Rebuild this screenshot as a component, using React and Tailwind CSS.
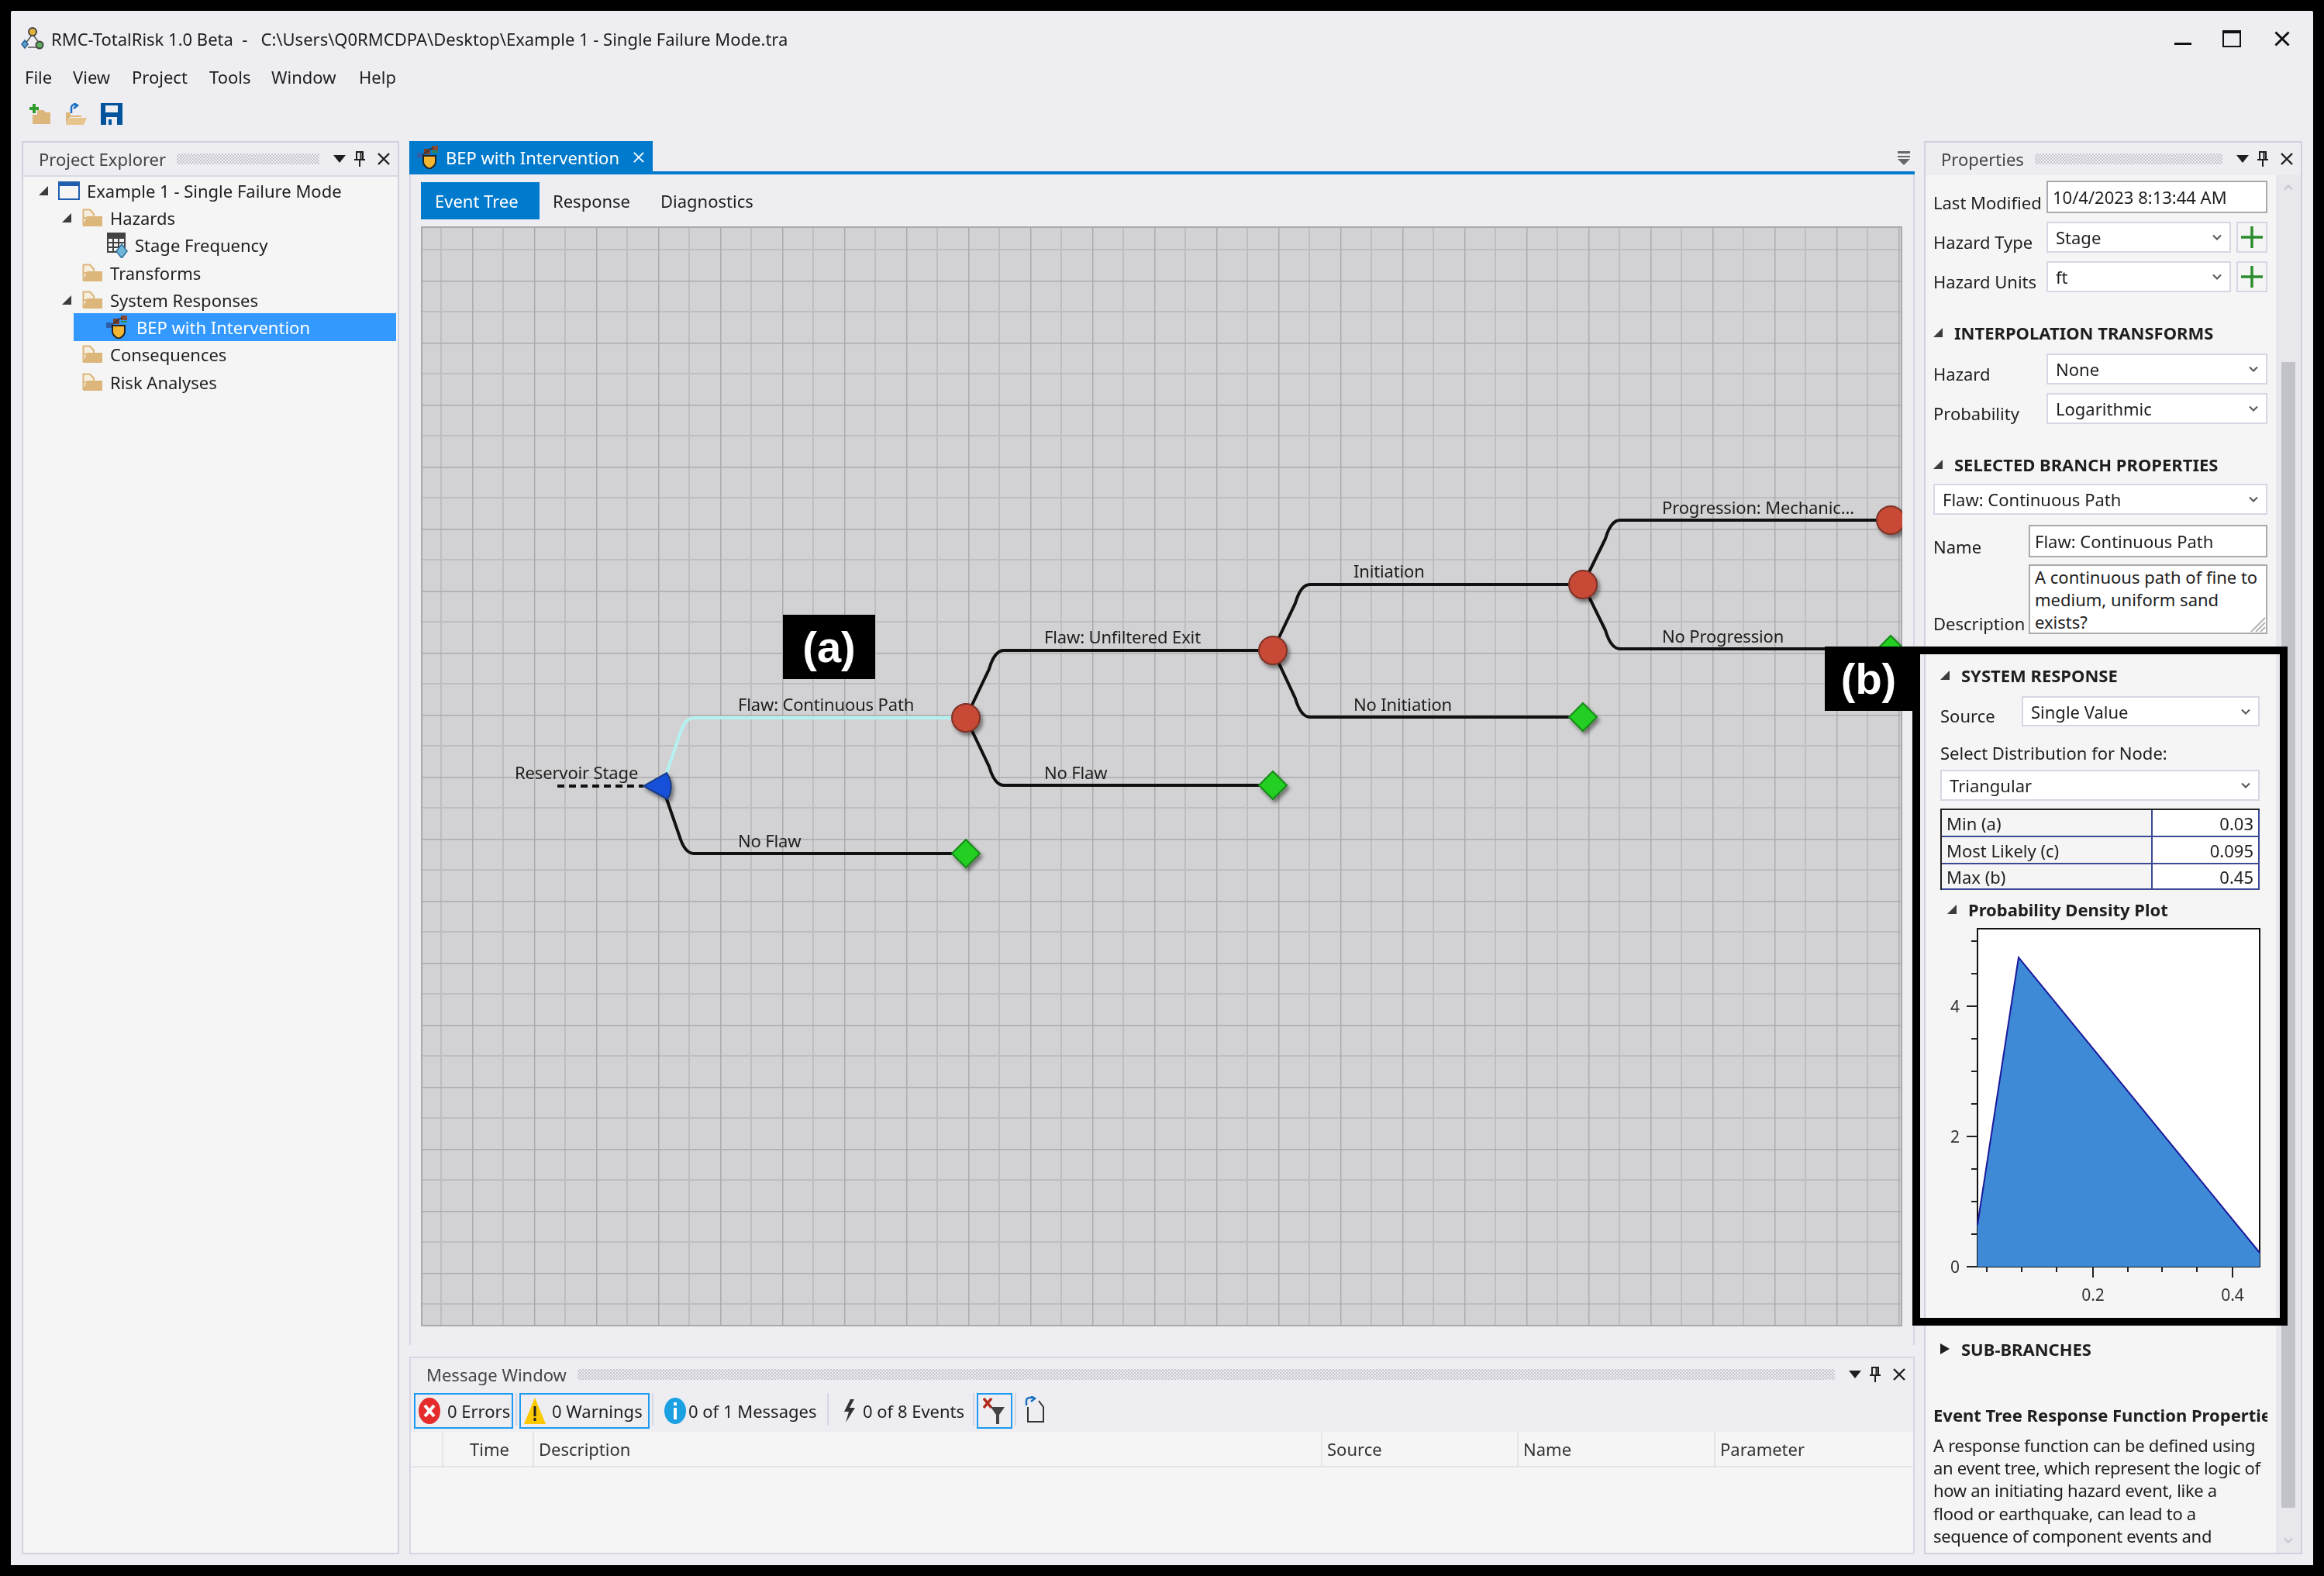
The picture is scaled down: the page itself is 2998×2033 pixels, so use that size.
import React from "react";

const XIcon = ({ s = 18, c = "#1e1e1e", w = 2.4 }) => (
  <svg width={s} height={s} viewBox="0 0 18 18" className="shrink-0"><path d="M2 2L16 16M16 2L2 16" stroke={c} strokeWidth={w} fill="none" /></svg>
);
const Pin = () => (
  <svg width="14" height="22" viewBox="0 0 14 22" className="shrink-0"><path d="M3 2h8v10H3zM0 12h14M7 12v9M8.5 2v10" stroke="#1e1e1e" strokeWidth="2" fill="none" /></svg>
);
const Corner = () => (
  <svg width="12" height="12" viewBox="0 0 12 12" className="shrink-0"><path d="M12 0V12H0Z" fill="#3c3c3c" /></svg>
);
const Chevron = ({ c = "#555" }) => (
  <svg width="12" height="8" viewBox="0 0 12 8" className="shrink-0"><path d="M1 1.5L6 6.5L11 1.5" stroke={c} strokeWidth="2" fill="none" /></svg>
);
const Folder = () => (
  <svg width="27" height="24" viewBox="0 0 27 24" className="shrink-0">
    <path d="M1.5 22V1.5H10L15 7V12H1.5Z" fill="#f6efe0" stroke="#dcb67a" strokeWidth="2" />
    <path d="M1 23L6 10H26V23Z" fill="#dcb67a" />
  </svg>
);
const BepIcon = () => (
  <svg width="30" height="30" viewBox="0 0 30 30" className="shrink-0">
    <rect x="0" y="9" width="7" height="7" fill="#2f5fa8" />
    <rect x="9" y="4" width="8" height="7" fill="#7a3d2a" />
    <rect x="19" y="0" width="8" height="6" fill="#8a4a35" />
    <path d="M19 7h8v2h-8z" fill="#2f8a3a" />
    <path d="M7 12L15 6M15 5l6-2" stroke="#333" strokeWidth="1.5" />
    <path d="M8 13h16v8c0 4-4 7-8 9-4-2-8-5-8-9z" fill="#f2b632" stroke="#222" strokeWidth="2" />
  </svg>
);
const TableIcon = () => (
  <svg width="28" height="34" viewBox="0 0 28 34" className="shrink-0">
    <rect x="1" y="1" width="24" height="6" fill="#424242" />
    <path d="M2 8h22v18H2z" fill="#f5f5f5" stroke="#424242" strokeWidth="2" />
    <path d="M9 8v18M16 8v18M2 14h22M2 20h22" stroke="#424242" strokeWidth="2" />
    <path d="M20 16l7 9-7 9-7-9z" fill="#6fb5d8" stroke="#2f6f9f" strokeWidth="1.5" />
  </svg>
);
const WinIcon = () => (
  <svg width="28" height="24" viewBox="0 0 28 24" className="shrink-0">
    <rect x="1" y="1" width="26" height="22" fill="#f5f5f5" stroke="#1f5fae" strokeWidth="2" />
    <rect x="1" y="1" width="26" height="5" fill="#1f5fae" />
  </svg>
);
const AppIcon = () => (
  <svg width="30" height="32" viewBox="0 0 30 32" className="shrink-0">
    <path d="M15 10L6 22M15 10L24 22M9 27H21" stroke="#555" strokeWidth="1.5" fill="none" />
    <circle cx="15" cy="7" r="5" fill="#e2b33c" stroke="#444" strokeWidth="2" />
    <path d="M5 18l4 5-4 5-4-5z" fill="#5a9fd0" stroke="#2a5f8f" strokeWidth="1.5" />
    <circle cx="24" cy="24" r="4.5" fill="#5fae5f" stroke="#444" strokeWidth="2" />
  </svg>
);

const DockHead = ({ title }) => (
  <div className="flex h-[42px] shrink-0 items-center pl-[20px]">
    <span className="whitespace-nowrap text-[#444]">{title}</span>
    <div className="ml-[14px] h-[14px] flex-1 bg-[repeating-conic-gradient(#c6c7cf_0_25%,transparent_0_50%)] bg-[length:4px_4px]" />
    <div className="flex w-[101px] shrink-0 items-center pl-[18px]">
      <svg width="16" height="10" viewBox="0 0 16 10" className="shrink-0"><path d="M0 0H16L8 10Z" fill="#1e1e1e" /></svg>
      <span className="ml-[11px]"><Pin /></span>
      <span className="ml-[15px]"><XIcon s={18} /></span>
    </div>
  </div>
);

const TreeRow = ({ indent, arrowPad = 14, arrow, icon, text, selected }) => (
  <div className={`flex h-[35.3px] items-center ${selected ? "ml-[65px] mr-[2px] bg-[#3399ff] text-white" : ""}`}>
    <div style={{ width: selected ? indent - 65 : indent, paddingRight: arrowPad }} className="flex shrink-0 items-center justify-end">
      {arrow && <Corner />}
    </div>
    {icon}
    <span className="ml-[9px] whitespace-nowrap">{text}</span>
  </div>
);

const Combo = ({ text, className = "h-[40px]" }) => (
  <div className={`flex items-center justify-between border-2 border-[#d5d7e5] bg-white pl-[10px] pr-[10px] ${className}`}>
    <span className="whitespace-nowrap">{text}</span>
    <Chevron />
  </div>
);
const Plus = () => (
  <div className="ml-[7px] flex h-[40px] w-[40px] shrink-0 items-center justify-center border-2 border-[#d5d7e5] bg-[#f5f5f5]">
    <svg width="28" height="28" viewBox="0 0 28 28"><path d="M14 0V28M0 14H28" stroke="#2c8c2c" strokeWidth="3.5" /></svg>
  </div>
);
const Field = ({ label, w, className = "", children }) => (
  <div className={`flex items-end ${className}`}>
    <span style={{ width: w }} className="shrink-0 whitespace-nowrap pb-[1px] leading-[26px]">{label}</span>
    {children}
  </div>
);
const Heading = ({ text, open = true, className = "" }) => (
  <div className={`flex h-[30px] items-center font-bold ${className}`}>
    {open ? <Corner /> : <svg width="12" height="14" viewBox="0 0 12 14" className="shrink-0"><path d="M0 0L12 7L0 14Z" fill="#1e1e1e" /></svg>}
    <span className="ml-[15px] whitespace-nowrap">{text}</span>
  </div>
);
const Input = ({ text, className = "" }) => (
  <div className={`flex h-[42px] flex-1 items-center border-2 border-[#a9a9b0] bg-white pl-[6px] ${className}`}>
    <span className="whitespace-nowrap">{text}</span>
  </div>
);
const ParamRow = ({ name, value, first, last }) => (
  <div className={`flex border-[#3b4a96] ${first ? "h-[33px]" : "h-[35px] border-t-2"} ${last ? "border-b-2" : ""}`}>
    <div className="flex w-[272px] items-center border-r-2 border-[#3b4a96] bg-[#f5f5f5] pl-[6px]">{name}</div>
    <div className="flex flex-1 items-center justify-end bg-white pr-[6px]">{value}</div>
  </div>
);

const branch = (x0, y0, x1, y1, x2) => {
  const s = y1 < y0 ? 1 : -1;
  return `M${x0} ${y0}L${x1 - 14} ${y1 + s * 24}Q${x1 - 7} ${y1} ${x1 + 5} ${y1}L${x2} ${y1}`;
};
const Circle = ({ x, y }) => <circle cx={x} cy={y} r="18" fill="#c84a36" stroke="#7c3226" strokeWidth="2" filter="url(#sh)" />;
const Diamond = ({ x, y }) => <path d={`M${x} ${y - 18}L${x + 18} ${y}L${x} ${y + 18}L${x - 18} ${y}Z`} fill="#22cf22" stroke="#178a17" strokeWidth="2" filter="url(#sh)" />;
const Lbl = ({ x, y, t }) => <text x={x} y={y} dominantBaseline="central" fontSize="22" fill="#1e1e1e" fontFamily="Noto Sans" letterSpacing="-0.15">{t}</text>;

const Diagram = () => (
  <svg viewBox="543 292 1911 1419" width="1911" height="1419" className="block">
    <defs>
      <pattern id="g" x="609" y="362" width="80" height="80" patternUnits="userSpaceOnUse">
        <path d="M40 0V80M0 40H80" stroke="#bebec0" strokeWidth="2" />
        <path d="M0 0V80M0 0H80" stroke="#ababad" strokeWidth="3" />
      </pattern>
      <filter id="sh" x="-30%" y="-30%" width="170%" height="170%"><feDropShadow dx="3" dy="4" stdDeviation="2.5" floodColor="#000" floodOpacity="0.45" /></filter>
    </defs>
    <rect x="543" y="292" width="1911" height="1419" fill="#d2d2d4" />
    <rect x="543" y="292" width="1911" height="1419" fill="url(#g)" />
    <rect x="544" y="293" width="1909" height="1417" fill="none" stroke="#a9a9ab" strokeWidth="2" />
    <path d="M719 1014H830" stroke="#111" strokeWidth="4" strokeDasharray="9 6" fill="none" />
    <path d={branch(858, 1003, 890, 926, 1246)} stroke="#b6f1f1" strokeWidth="4" fill="none" />
    <path d={branch(858, 1025, 890, 1101, 1246)} stroke="#111" strokeWidth="4" fill="none" />
    <path d={branch(1246, 926, 1290, 839, 1642)} stroke="#111" strokeWidth="4" fill="none" />
    <path d={branch(1246, 926, 1290, 1013, 1642)} stroke="#111" strokeWidth="4" fill="none" />
    <path d={branch(1642, 839, 1685, 754, 2042)} stroke="#111" strokeWidth="4" fill="none" />
    <path d={branch(1642, 839, 1685, 925, 2042)} stroke="#111" strokeWidth="4" fill="none" />
    <path d={branch(2042, 754, 2085, 671, 2439)} stroke="#111" strokeWidth="4" fill="none" />
    <path d={branch(2042, 754, 2085, 837, 2439)} stroke="#111" strokeWidth="4" fill="none" />
    <path d="M830 1014L860 997Q871 1014 861 1031Z" fill="#1450d8" stroke="#1a3a80" strokeWidth="2" filter="url(#sh)" />
    <Circle x={1246} y={926} /><Circle x={1642} y={839} /><Circle x={2042} y={754} /><Circle x={2439} y={671} />
    <Diamond x={1246} y={1101} /><Diamond x={1642} y={1013} /><Diamond x={2042} y={925} /><Diamond x={2439} y={838} />
    <Lbl x={664} y={996} t="Reservoir Stage" />
    <Lbl x={952} y={908} t="Flaw: Continuous Path" />
    <Lbl x={952} y={1084} t="No Flaw" />
    <Lbl x={1347} y={821} t="Flaw: Unfiltered Exit" />
    <Lbl x={1347} y={996} t="No Flaw" />
    <Lbl x={1746} y={736} t="Initiation" />
    <Lbl x={1746} y={908} t="No Initiation" />
    <Lbl x={2144} y={654} t="Progression: Mechanic..." />
    <Lbl x={2144} y={820} t="No Progression" />
  </svg>
);

const Plot = () => {
  const ys = [0, 1, 2, 3, 4, 5, 6, 7, 8, 9, 10].map((i) => 1634 - i * 42);
  const xs = [2563, 2608, 2653, 2700, 2745, 2789, 2834, 2880];
  return (
    <svg viewBox="2503 1190 424 500" width="424" height="500" className="block">
      <rect x="2551" y="1198" width="364" height="436" fill="#fff" stroke="#111" strokeWidth="2" />
      <path d="M2551 1634V1580L2604 1235L2915 1616V1634Z" fill="#3f8ad6" />
      <path d="M2551 1580L2604 1235L2915 1616" fill="none" stroke="#1a1a9c" strokeWidth="2" />
      {ys.map((y, i) => <path key={y} d={`M${i % 4 === 0 ? 2537 : 2543} ${y}H2551`} stroke="#222" strokeWidth="2" />)}
      {xs.map((x) => <path key={x} d={`M${x} 1634V${x === 2700 || x === 2880 ? 1648 : 1641}`} stroke="#222" strokeWidth="2" />)}
      {[["4", 1298], ["2", 1466], ["0", 1634]].map(([t, y]) => (
        <text key={t} x="2522" y={y} textAnchor="middle" dominantBaseline="central" fontSize="21" fill="#333" fontFamily="Noto Sans">{t}</text>
      ))}
      {[["0.2", 2700], ["0.4", 2880]].map(([t, x]) => (
        <text key={t} x={x} y="1670" textAnchor="middle" dominantBaseline="central" fontSize="21" fill="#333" fontFamily="Noto Sans">{t}</text>
      ))}
    </svg>
  );
};

const ToolBtn = ({ on, children, className = "" }) => (
  <div className={`flex h-[46px] items-center border-2 ${on ? "border-[#1e9bf0]" : "border-transparent"} ${className}`}>{children}</div>
);
const Sep = () => <div className="mx-[3px] h-[42px] w-[2px] shrink-0 bg-[#d5d7e5]" />;

export default function App() {
  return (
    <div className="relative h-[2033px] w-[2998px] overflow-hidden bg-black p-[14px] font-['Noto_Sans',sans-serif] text-[22px] leading-[30px] text-[#1e1e1e]">
      <div className="flex h-full flex-col rounded-t-[2px] bg-[#eeeef2] blur-[0.5px]">
        <div className="flex h-[72px] shrink-0 items-center pl-[13px]">
          <AppIcon />
          <span className="ml-[9px] whitespace-pre">{"RMC-TotalRisk 1.0 Beta  -   C:\\Users\\Q0RMCDPA\\Desktop\\Example 1 - Single Failure Mode.tra"}</span>
          <div className="ml-auto flex items-center pr-[29px]">
            <div className="h-[3px] w-[22px] translate-y-[6px] bg-[#111]" />
            <div className="ml-[40px] h-[22px] w-[24px] border-2 border-t-4 border-[#111]" />
            <span className="ml-[42px]"><XIcon s={22} c="#111" w={2.4} /></span>
          </div>
        </div>
        <div className="flex h-[28px] shrink-0 items-start pl-[18px] leading-[26px]">
          <span className="w-[62px]">File</span>
          <span className="w-[76px]">View</span>
          <span className="w-[100px]">Project</span>
          <span className="w-[80px]">Tools</span>
          <span className="w-[113px]">Window</span>
          <span>Help</span>
        </div>
        <div className="flex h-[68px] shrink-0 items-center pb-[2px] pl-[23px]">
          <svg width="30" height="26" viewBox="0 0 30 26" className="shrink-0">
            <path d="M5 0h4v4h4v4H9v4H5V8H1V4h4z" fill="#2f9e2f" />
            <path d="M5 14h6V8h8l3 3h6v15H5z" fill="#dcb67a" />
          </svg>
          <svg width="30" height="28" viewBox="0 0 30 28" className="ml-[16px] shrink-0">
            <path d="M9 13V6a4 4 0 0 1 4-4h3M12 0l5 3-5 4" stroke="#1a6fc0" strokeWidth="2.5" fill="none" />
            <path d="M2 12h6v4h14v2H7L2 27z" fill="#dcb67a" />
            <path d="M7 19h22l-4 9H2z" fill="#e8c58c" />
          </svg>
          <svg width="28" height="28" viewBox="0 0 28 28" className="ml-[17px] shrink-0">
            <path d="M0 0H28V28H0Z" fill="#00539c" />
            <rect x="6" y="3" width="16" height="9" fill="#eeeef2" />
            <rect x="7" y="18" width="14" height="10" fill="#eeeef2" />
            <rect x="10" y="21" width="4" height="7" fill="#00539c" />
          </svg>
        </div>
        <div className="flex min-h-0 flex-1 gap-x-[12px] pb-[14px] pl-[14px] pr-[14px]">
          <div className="flex w-[487px] shrink-0 flex-col border-2 border-[#cfd1de]">
            <DockHead title="Project Explorer" />
            <div className="flex-1 border-t-2 border-[#d8dae5] bg-[#f5f5f5]">
              <TreeRow indent={45} arrowPad={13} arrow icon={<WinIcon />} text="Example 1 - Single Failure Mode" />
              <TreeRow indent={76} arrow icon={<Folder />} text="Hazards" />
              <TreeRow indent={107} icon={<TableIcon />} text="Stage Frequency" />
              <TreeRow indent={76} icon={<Folder />} text="Transforms" />
              <TreeRow indent={76} arrow icon={<Folder />} text="System Responses" />
              <TreeRow indent={107} selected icon={<BepIcon />} text="BEP with Intervention" />
              <TreeRow indent={76} icon={<Folder />} text="Consequences" />
              <TreeRow indent={76} icon={<Folder />} text="Risk Analyses" />
            </div>
          </div>
          <div className="ml-[1px] flex min-w-0 flex-1 flex-col">
            <div className="flex h-[43px] shrink-0 items-end">
              <div className="flex h-[43px] w-[314px] shrink-0 items-center bg-[#007acc] pb-[2px] pl-[10px] text-white">
                <BepIcon />
                <span className="ml-[7px] whitespace-nowrap">BEP with Intervention</span>
                <span className="ml-[17px]"><XIcon s={16} c="#fff" w={2} /></span>
              </div>
              <div className="relative h-[43px] flex-1 border-b-4 border-[#007acc]">
                <svg width="16" height="18" viewBox="0 0 16 18" className="absolute right-[6px] top-[13px]"><path d="M0 0H16V3H0ZM0 6H16V8H0ZM0 10H16L8 18Z" fill="#666" /></svg>
              </div>
            </div>
            <div className="flex h-[1510px] shrink-0 flex-col border-x-2 border-[#d5d7e5] pl-[13px] pr-[14px]">
              <div className="mt-[10px] flex h-[48px] shrink-0 items-center">
                <div className="flex h-[48px] w-[153px] items-center bg-[#007acc] pl-[18px] text-white">Event Tree</div>
                <span className="ml-[17px]">Response</span>
                <span className="ml-[39px]">Diagnostics</span>
              </div>
              <div className="relative mt-[9px] h-[1419px] w-[1911px] overflow-hidden">
                <Diagram />
                <div className="absolute left-[467px] top-[501px] flex h-[83px] w-[119px] items-center justify-center bg-black font-['Liberation_Sans',sans-serif] text-[56px] font-bold text-white">(a)</div>
              </div>
            </div>
            <div className="mt-[15px] flex min-h-0 flex-1 flex-col border-2 border-[#d5d7e5]">
              <DockHead title="Message Window" />
              <div className="flex h-[53px] shrink-0 items-start pl-[4px] pt-[3px]">
                <ToolBtn on className="w-[128px] pl-[3px]">
                  <svg width="30" height="36" viewBox="0 0 30 36" className="shrink-0"><ellipse cx="15" cy="18" rx="14" ry="17" fill="#e52b2b" /><path d="M9 11L21 25M21 11L9 25" stroke="#fff" strokeWidth="4" /></svg>
                  <span className="ml-[8px] whitespace-nowrap">0 Errors</span>
                </ToolBtn>
                <Sep />
                <ToolBtn on className="w-[168px] pl-[3px]">
                  <svg width="30" height="36" viewBox="0 0 30 36" className="shrink-0"><path d="M15 1L29 35H1Z" fill="#fcc800" /><path d="M15 12V25M15 27V31" stroke="#222" strokeWidth="3" /></svg>
                  <span className="ml-[7px] whitespace-nowrap">0 Warnings</span>
                </ToolBtn>
                <Sep />
                <ToolBtn className="w-[218px] pl-[8px]">
                  <svg width="30" height="36" viewBox="0 0 30 36" className="shrink-0"><ellipse cx="15" cy="18" rx="14" ry="17" fill="#1ba1e2" /><path d="M15 7V11M15 14V29" stroke="#fff" strokeWidth="4" /></svg>
                  <span className="ml-[2px] whitespace-nowrap">0 of 1 Messages</span>
                </ToolBtn>
                <Sep />
                <ToolBtn className="w-[180px] pl-[14px]">
                  <svg width="16" height="30" viewBox="0 0 16 30" className="shrink-0"><path d="M9 0L1 16H7L3 30L15 11H8L14 0Z" fill="#333" /></svg>
                  <span className="ml-[9px] whitespace-nowrap">0 of 8 Events</span>
                </ToolBtn>
                <Sep />
                <ToolBtn on className="w-[46px] pl-[6px]">
                  <svg width="30" height="34" viewBox="0 0 30 34" className="shrink-0"><path d="M1 1L11 13M11 1L1 13" stroke="#b22a1a" strokeWidth="3.5" /><path d="M10 12H28L21 22V34H17V22Z" fill="#444" /></svg>
                </ToolBtn>
                <Sep />
                <span className="ml-[8px] mt-[4px]">
                  <svg width="26" height="34" viewBox="0 0 26 34" className="shrink-0"><path d="M4 14V33H24V14L18 6" stroke="#333" strokeWidth="2" fill="none" /><path d="M2 12V6a4 4 0 0 1 4-4h4M8 0l5 3-5 4" stroke="#1a6fc0" strokeWidth="2.5" fill="none" /></svg>
                </span>
              </div>
              <div className="flex min-h-0 flex-1 flex-col bg-[#f5f5f5]">
                <div className="flex h-[46px] shrink-0 border-b-2 border-[#e4e5ea] text-[#333]">
                  <div className="w-[42px] border-r-2 border-[#e4e5ea]" />
                  <div className="flex w-[117px] items-center justify-end border-r-2 border-[#e4e5ea] pr-[30px]">Time</div>
                  <div className="flex w-[1017px] items-center border-r-2 border-[#e4e5ea] pl-[6px]">Description</div>
                  <div className="flex w-[253px] items-center border-r-2 border-[#e4e5ea] pl-[6px]">Source</div>
                  <div className="flex w-[254px] items-center border-r-2 border-[#e4e5ea] pl-[6px]">Name</div>
                  <div className="flex flex-1 items-center pl-[6px]">Parameter</div>
                </div>
              </div>
            </div>
          </div>
          <div className="flex w-[488px] shrink-0 flex-col border-2 border-[#cfd1de]">
            <DockHead title="Properties" />
            <div className="flex min-h-0 flex-1 bg-[#f5f5f5]">
              <div className="min-w-0 flex-1 overflow-hidden pl-[10px] pr-[11px] pt-[7px]">
                <Field label="Last Modified" w={146}><Input text="10/4/2023 8:13:44 AM" /></Field>
                <Field label="Hazard Type" w={146} className="mt-[11px]"><Combo text="Stage" className="h-[40px] flex-1" /><Plus /></Field>
                <Field label="Hazard Units" w={146} className="mt-[11px]"><Combo text="ft" className="h-[40px] flex-1" /><Plus /></Field>
                <Heading text="INTERPOLATION TRANSFORMS" className="mt-[37px]" />
                <Field label="Hazard" w={146} className="mt-[12px]"><Combo text="None" className="h-[40px] flex-1" /></Field>
                <Field label="Probability" w={146} className="mt-[11px]"><Combo text="Logarithmic" className="h-[40px] flex-1" /></Field>
                <Heading text="SELECTED BRANCH PROPERTIES" className="mt-[37px]" />
                <Combo text="Flaw: Continuous Path" className="mt-[10px] h-[40px]" />
                <Field label="Name" w={123} className="mt-[13px]"><Input text="Flaw: Continuous Path" /></Field>
                <Field label="Description" w={123} className="mt-[9px]">
                  <div className="relative h-[90px] flex-1 border-2 border-[#a9a9b0] bg-white pl-[6px] leading-[29px]">
                    A continuous path of fine to<br />medium, uniform sand<br />exists?
                    <svg width="20" height="20" viewBox="0 0 20 20" className="absolute bottom-0 right-0"><path d="M19 1L1 19M19 7L7 19M19 13L13 19" stroke="#b5b5b5" strokeWidth="2" /></svg>
                  </div>
                </Field>
                <div className="pl-[9px] pr-[10px]">
                  <Heading text="SYSTEM RESPONSE" className="mt-[38px]" />
                  <Field label="Source" w={105} className="mt-[12px]"><Combo text="Single Value" className="h-[39px] flex-1" /></Field>
                  <div className="mt-[19px] h-[30px] whitespace-nowrap">Select Distribution for Node:</div>
                  <Combo text="Triangular" className="mt-[7px] h-[40px]" />
                  <div className="mt-[10px] border-l-2 border-t-2 border-l-[#222] border-t-[#222]">
                    <div className="border-r-2 border-[#3b4a96]">
                      <ParamRow first name="Min (a)" value="0.03" />
                      <ParamRow name="Most Likely (c)" value="0.095" />
                      <ParamRow name="Max (b)" value="0.45" last />
                    </div>
                  </div>
                  <Heading text="Probability Density Plot" className="ml-[9px] mt-[10px]" />
                  <div className="mt-[2px] h-[500px]"><Plot /></div>
                  <Heading text="SUB-BRANCHES" open={false} className="mt-[35px]" />
                </div>
                <div className="mt-[55px] h-[30px] w-[431px] overflow-hidden whitespace-nowrap font-bold">Event Tree Response Function Properties</div>
                <div className="mt-[10px] whitespace-nowrap leading-[29.2px] tracking-[-0.3px]">
                  A response function can be defined using<br />an event tree, which represent the logic of<br />how an initiating hazard event, like a<br />flood or earthquake, can lead to a<br />sequence of component events and<br />possible outcomes like dam failure
                </div>
              </div>
              <div className="flex w-[32px] shrink-0 flex-col items-center justify-between bg-[#e8e8ec] pb-[12px] pt-[12px]">
                <span className="rotate-180"><Chevron c="#c4c5cc" /></span>
                <span><Chevron c="#c4c5cc" /></span>
              </div>
            </div>
          </div>
        </div>
      </div>
      <div className="absolute left-[2943px] top-[467px] h-[1478px] w-[18px] bg-[#c2c3c9]" />
      <div className="absolute left-[2467px] top-[834px] h-[876px] w-[484px] border-[10px] border-black" />
      <div className="absolute left-[2354px] top-[834px] flex h-[83px] w-[113px] items-center justify-center bg-black font-['Liberation_Sans',sans-serif] text-[56px] font-bold text-white">(b)</div>
    </div>
  );
}
